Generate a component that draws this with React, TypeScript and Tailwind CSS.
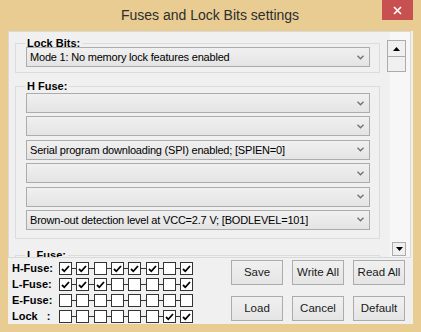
import React from 'react';

// Bits shown in the bottom grid, left to right
const fuseRows: { label: string; bits: number[] }[] = [
  { label: 'H-Fuse:', bits: [1, 1, 0, 1, 1, 1, 0, 1] },
  { label: 'L-Fuse:', bits: [1, 1, 1, 0, 0, 0, 0, 1] },
  { label: 'E-Fuse:', bits: [0, 0, 0, 0, 0, 0, 0, 0] },
  { label: 'Lock   :', bits: [0, 0, 0, 0, 0, 0, 1, 1] },
];

const hFuseOptions = [
  '',
  '',
  'Serial program downloading (SPI) enabled; [SPIEN=0]',
  '',
  '',
  'Brown-out detection level at VCC=2.7 V; [BODLEVEL=101]',
];

function Combo({ text }: { text?: string }) {
  return (
    <div className="flex h-[20px] items-center justify-between border border-[#acacac] bg-linear-to-b from-[#f0f0f0] to-[#e4e4e4] pl-[3px] pr-[5px]">
      <span className="whitespace-nowrap text-[11px] leading-[14px] tracking-[-0.2px] text-black">{text}</span>
      <svg width="7" height="5" viewBox="0 0 7 5">
        <path d="M0.5 0.8 L3.5 3.8 L6.5 0.8" stroke="#707070" strokeWidth="1.3" fill="none" />
      </svg>
    </div>
  );
}

function Group({ label, className, children }: { label: string; className: string; children?: React.ReactNode }) {
  return (
    <div className={`ml-[6px] mr-[7px] border border-[#dcdcdc] pl-[10px] pr-[9px] ${className}`}>
      <div className="-ml-[1px] -mt-[8px] w-fit bg-[#f0f0f0] px-[2px] text-[11px] font-bold leading-[14px] text-black">
        {label}
      </div>
      {children}
    </div>
  );
}

function Check({ on }: { on: boolean }) {
  return (
    <div className="flex h-[13px] w-[13px] items-center justify-center border border-[#333] bg-white">
      {on && (
        <svg width="9" height="8" viewBox="0 0 9 8">
          <path d="M1 4 L3.3 6.3 L8 1" stroke="#000" strokeWidth="1.8" fill="none" />
        </svg>
      )}
    </div>
  );
}

function Btn({ children }: { children: React.ReactNode }) {
  return (
    <button className="flex h-[25px] w-[52px] items-center justify-center border border-[#acacac] bg-linear-to-b from-[#f0f0f0] to-[#e5e5e5] text-[11.5px] text-[#1a1a1a]">
      {children}
    </button>
  );
}

export default function App() {
  return (
    <div className="flex h-[332px] w-[421px] flex-col bg-[#e8cc92] font-['Liberation_Sans',sans-serif]">
      {/* barra de título */}
      <div className="flex h-[31px] shrink-0 items-start">
        <div className="w-[38px]" />
        <div className="flex h-[31px] flex-1 items-center justify-center text-[14px] text-[#2e2e2e]">
          Fuses and Lock Bits settings
        </div>
        <div className="mr-[8px] flex h-[20px] w-[31px] items-center justify-center bg-[#c75050]">
          <svg width="9" height="9" viewBox="0 0 9 9">
            <path d="M1 1 L8 8 M8 1 L1 8" stroke="#fff" strokeWidth="1.6" />
          </svg>
        </div>
      </div>

      <div className="mx-[8px] mb-[8px] flex flex-1 flex-col bg-[#f0f0f0]">
        {/* panel con scroll */}
        <div className="mr-[2px] flex h-[227px] shrink-0 border border-[#d9d9d9]">
          <div className="flex w-[378px] flex-col overflow-hidden">
            <Group label="Lock Bits:" className="mt-[11px] pb-[5px]">
              <div className="-mt-[3px]">
                <Combo text="Mode 1: No memory lock features enabled" />
              </div>
            </Group>
            <Group label="H Fuse:" className="mt-[13px] pb-[8px]">
              <div className="flex flex-col gap-[3.4px]">
                {hFuseOptions.map((t, i) => (
                  <Combo key={i} text={t} />
                ))}
              </div>
            </Group>
            <Group label="L Fuse:" className="mt-[16px] h-[20px]" />
          </div>
          <div className="flex flex-1 flex-col bg-[linear-gradient(to_right,#f0f0f0_3px,#f7f7f7_3px)] pt-[8px]">
            <div className="flex h-[17px] w-[19px] items-center justify-center border border-[#acacac] bg-[#f0f0f0]">
              <svg width="7" height="4" viewBox="0 0 7 4">
                <path d="M0 4 L3.5 0 L7 4 Z" fill="#000" />
              </svg>
            </div>
            <div className="-mt-[1px] h-[16px] w-[19px] border border-[#acacac] bg-[#f0f0f0]" />
            <div className="flex-1" />
            <div className="mb-[1px] ml-[5px] flex h-[14px] w-[14px] items-center justify-center border border-[#acacac] bg-[#f0f0f0]">
              <svg width="7" height="4" viewBox="0 0 7 4">
                <path d="M0 0 L3.5 4 L7 0 Z" fill="#000" />
              </svg>
            </div>
          </div>
        </div>

        {/* fila inferior: bits + botones */}
        <div className="flex flex-1">
          <div className="flex flex-col gap-[3px] pl-[4px] pt-[4px]">
            {fuseRows.map((row) => (
              <div key={row.label} className="flex h-[13px] items-center">
                <span className="w-[47px] whitespace-pre text-[11px] font-bold leading-[13px] text-black">{row.label}</span>
                {row.bits.map((b, i) => (
                  <React.Fragment key={i}>
                    {i > 0 && <div className="h-px w-[4.33px] bg-[#333]" />}
                    <Check on={b === 1} />
                  </React.Fragment>
                ))}
              </div>
            ))}
          </div>
          <div className="ml-auto mr-[8px] grid grid-cols-3 content-start gap-x-[9px] gap-y-[11px] pt-[2px]">
            <Btn>Save</Btn>
            <Btn>Write All</Btn>
            <Btn>Read All</Btn>
            <Btn>Load</Btn>
            <Btn>Cancel</Btn>
            <Btn>Default</Btn>
          </div>
        </div>
      </div>
    </div>
  );
}
